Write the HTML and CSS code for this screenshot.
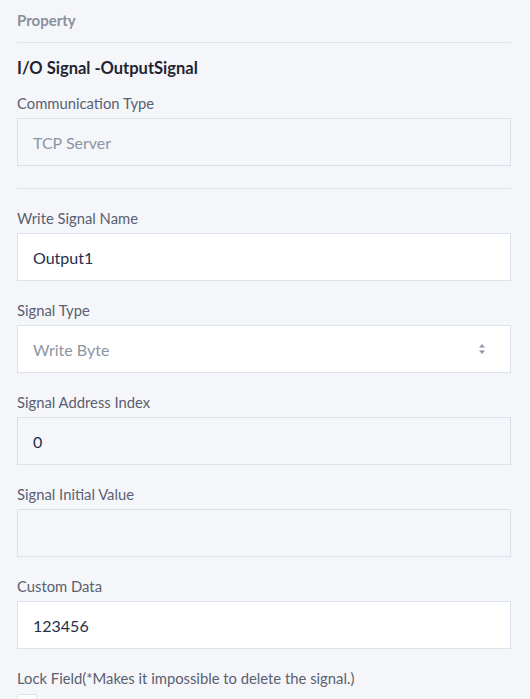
FILE: index.html
```html
<!DOCTYPE html>
<html>
<head>
<meta charset="utf-8">
<link rel="stylesheet" href="styles.css">
</head>
<body>
<div class="panel">
  <div class="panel-title">Property</div>
  <div class="content">
    <div class="heading">I/O Signal -OutputSignal</div>
    <div class="field first">
      <div class="label">Communication Type</div>
      <div class="input disabled muted">TCP Server</div>
    </div>
    <div class="sep"></div>
    <div class="field">
      <div class="label">Write Signal Name</div>
      <div class="input">Output1</div>
    </div>
    <div class="field">
      <div class="label">Signal Type</div>
      <div class="input select muted">
        <span>Write Byte</span>
        <svg class="arrows" width="8" height="12" viewBox="0 0 8 12"><path d="M4 1 L7 4.5 H1 Z" fill="#8d94a3"/><path d="M4 11 L7 7.5 H1 Z" fill="#8d94a3"/></svg>
      </div>
    </div>
    <div class="field">
      <div class="label">Signal Address Index</div>
      <div class="input disabled">0</div>
    </div>
    <div class="field">
      <div class="label">Signal Initial Value</div>
      <div class="input disabled"></div>
    </div>
    <div class="field">
      <div class="label">Custom Data</div>
      <div class="input">123456</div>
    </div>
    <div class="field">
      <div class="label">Lock Field(*Makes it impossible to delete the signal.)</div>
      <div class="checkbox"></div>
    </div>
  </div>
</div>
</body>
</html>
```
FILE: styles.css
```css
html, body {
  margin: 0;
  padding: 0;
  background: #f5f6fa;
}
body {
  font-family: Lato, "Noto Sans", sans-serif;
  color: #4a5160;
  overflow: hidden;
  height: 699px;
}
.panel {
  padding: 0 19px 0 17px;
}
.panel-title {
  height: 43px;
  border-bottom: 1px solid #e1e4ea;
  font-size: 15px;
  font-weight: 700;
  color: #8a909c;
  line-height: 40px;
  box-sizing: border-box;
}
.heading {
  font-size: 16.5px;
  font-weight: 700;
  color: #1f2430;
  margin-top: 13px;
  line-height: 24px;
}
.field {
  display: flex;
  flex-direction: column;
}
.field.first {
  margin-top: 13px;
}
.label {
  font-size: 14.8px;
  line-height: 20px;
  color: #596070;
  margin-bottom: 5px;
}
.input {
  height: 48px;
  box-sizing: border-box;
  border: 1px solid #dae1ec;
  background: #fff;
  padding: 0 15px;
  display: flex;
  align-items: center;
  font-size: 16px;
  color: #243049;
}
.input.disabled {
  background: #f5f6fa;
}
.input.muted {
  color: #8d94a3;
}
.select {
  justify-content: space-between;
  padding-right: 24px;
}
.sep {
  height: 1px;
  background: #dfe2e8;
  margin-top: 22px;
  margin-bottom: 19px;
}
.field + .field {
  margin-top: 19px;
}
.checkbox {
  width: 20px;
  height: 20px;
  box-sizing: border-box;
  border: 1px solid #dae1ec;
  background: #fff;
  border-radius: 2px;
  margin-top: 1px;
}
```
